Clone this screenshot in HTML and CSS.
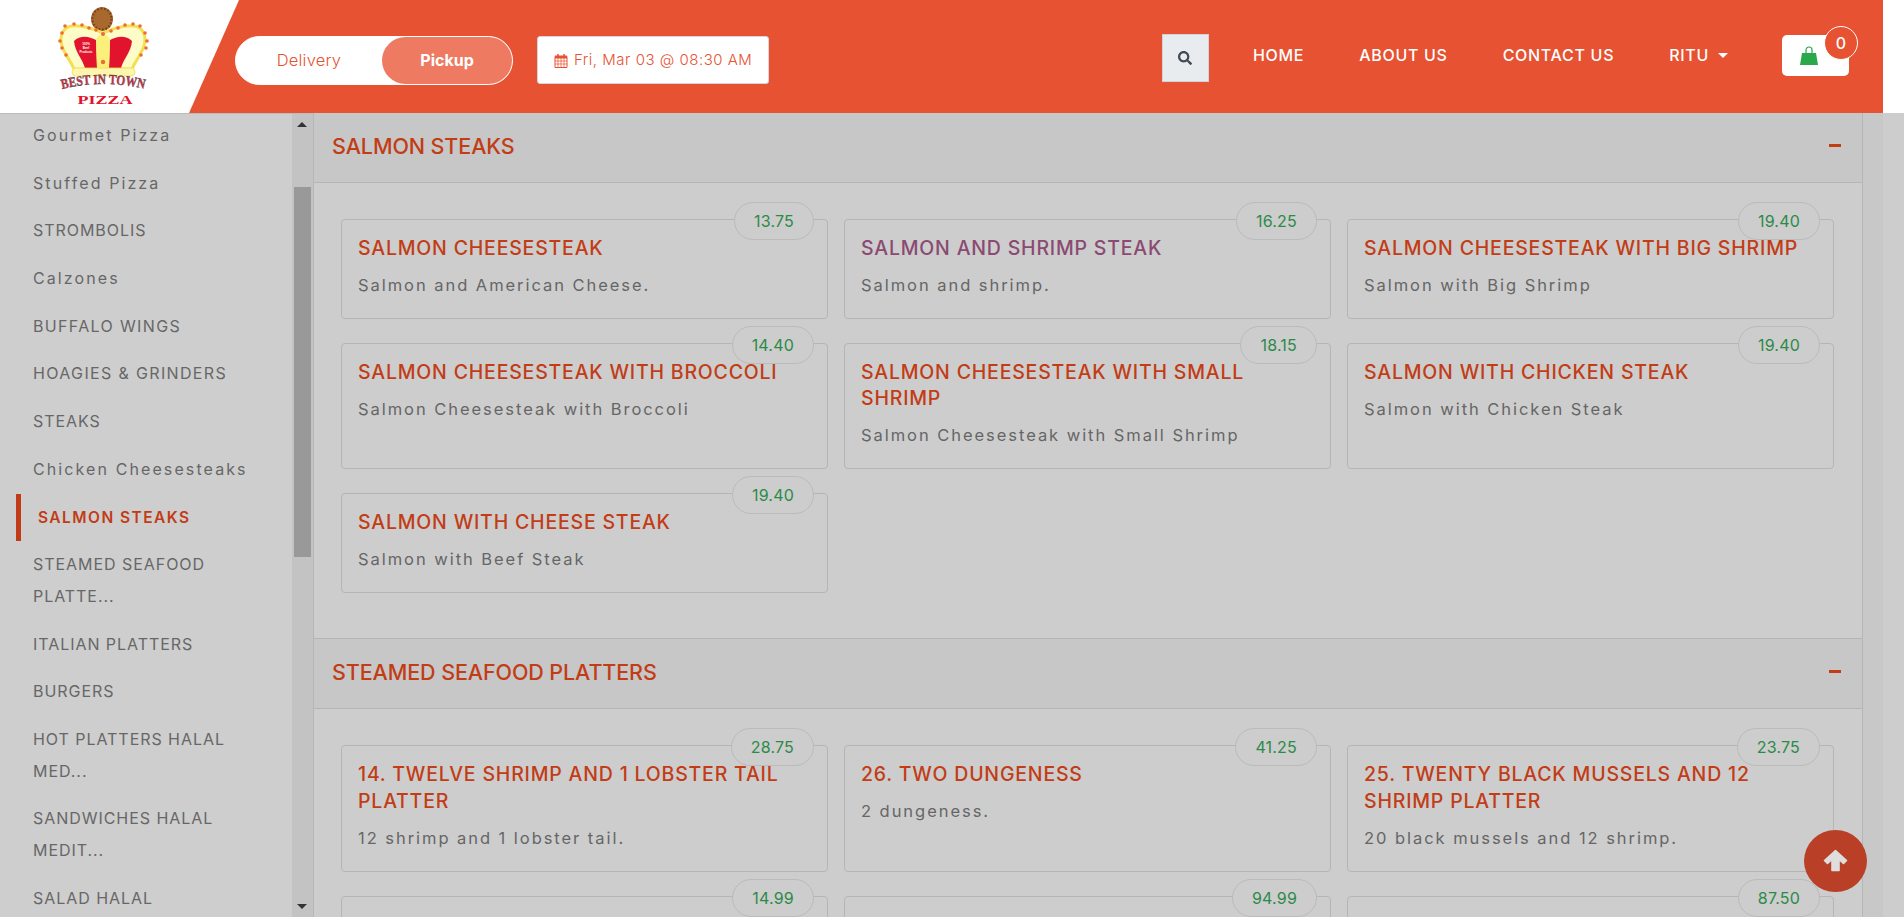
FILE: index.html
```html
<!DOCTYPE html>
<html lang="en">
<head>
<meta charset="utf-8">
<title>Best In Town Pizza</title>
<link rel="stylesheet" href="styles.css">
</head>
<body>
<header class="top">
  <div class="bar">
    <a class="logo">
      <svg class="logo-art" viewBox="0 0 106 106" width="106" height="106">
        <ellipse cx="52" cy="19" rx="11" ry="12" fill="#a9682e"/>
        <ellipse cx="52" cy="19" rx="9.500" ry="10.500" fill="none" stroke="#6e3f1a" stroke-width="2" stroke-dasharray="1.500 2"/>
        <path d="M53 33C44 29 32 25 22 26C13 27 9 36 12 46C15 55 20 60 24 69H82C86 60 91 55 94 46C97 36 93 27 84 26C74 25 62 29 53 33Z" fill="#fdfbc8" stroke="#f2e04e" stroke-width="3"/>
        <path d="M46 40C39 36 30 35 24 41C25 52 32 58 35 68H47Z" fill="#e2132c"/>
        <path d="M60 40C67 36 76 35 82 41C81 52 74 58 71 68H59Z" fill="#e2132c"/>
        <path d="M47 68L46 40C48 33 58 33 60 40L59 68Z" fill="#fbf07a"/>
        <rect x="22" y="68" width="63" height="8" rx="4" fill="#fdf6b0" stroke="#f2e04e" stroke-width=".8"/>
        <g fill="#ef6a3a">
          <circle cx="15" cy="26" r="1.800"/><circle cx="24" cy="24" r="1.800"/><circle cx="32" cy="25" r="1.800"/><circle cx="39" cy="28" r="1.800"/><circle cx="46" cy="30" r="1.800"/><circle cx="53" cy="34" r="2"/>
          <circle cx="61" cy="31" r="1.800"/><circle cx="68" cy="28" r="1.800"/><circle cx="75" cy="25" r="1.800"/><circle cx="83" cy="24" r="1.800"/><circle cx="90" cy="26" r="1.800"/>
          <circle cx="95" cy="33" r="1.800"/><circle cx="97" cy="41" r="1.800"/><circle cx="96" cy="48" r="1.800"/><circle cx="91" cy="55" r="1.800"/>
          <circle cx="12" cy="33" r="1.800"/><circle cx="10" cy="41" r="1.800"/><circle cx="12" cy="48" r="1.800"/><circle cx="16" cy="55" r="1.800"/><circle cx="53" cy="62" r="2.200"/>
        </g>
        <text x="36" y="45" text-anchor="middle" class="logo-tiny">100%</text>
        <text x="36" y="49" text-anchor="middle" class="logo-tiny">Beef</text>
        <text x="36" y="53" text-anchor="middle" class="logo-tiny">Products</text>
        <path id="logo-arc" d="M12 89Q53 79 95 89" fill="none"/>
        <text class="logo-best"><textPath href="#logo-arc" textLength="83" lengthAdjust="spacingAndGlyphs">BEST IN TOWN</textPath></text>
        <text x="55" y="104" text-anchor="middle" class="logo-pizza" textLength="55" lengthAdjust="spacingAndGlyphs">PIZZA</text>
      </svg>
    </a>
    <div class="toggle">
      <span class="toggle-off">Delivery</span>
      <span class="toggle-on">Pickup</span>
    </div>
    <div class="date">
      <svg class="cal" viewBox="0 0 14 15" width="14" height="15">
        <path d="M1 3.500h12v11H1z" fill="none" stroke="#e8502f"/>
        <path d="M1 2.500h12v3H1z" fill="#e8502f"/>
        <path d="M4 1v3M10 1v3" stroke="#e8502f" stroke-width="1.500"/>
        <path d="M1 8h12M1 11h12M4 5v9M7 5v9M10 5v9" stroke="#e8502f" stroke-width=".7"/>
      </svg>
      <span>Fri, Mar 03 @ 08:30 AM</span>
    </div>
    <div class="spacer"></div>
    <button class="search">
      <svg viewBox="0 0 512 512" width="14" height="14"><path fill="#3f4a54" d="M505 442.700L405.300 343c-4.500-4.500-10.600-7-17-7H372c27.600-35.300 44-79.700 44-128C416 93.100 322.900 0 208 0S0 93.100 0 208s93.100 208 208 208c48.300 0 92.700-16.400 128-44v16.300c0 6.400 2.500 12.500 7 17l99.700 99.700c9.400 9.400 24.600 9.400 33.900 0l28.300-28.300c9.400-9.400 9.400-24.600.1-34zM208 336c-70.700 0-128-57.200-128-128 0-70.700 57.200-128 128-128 70.700 0 128 57.200 128 128 0 70.700-57.200 128-128 128z"/></svg>
    </button>
    <nav class="nav">
      <a>HOME</a>
      <a>ABOUT US</a>
      <a>CONTACT US</a>
      <a class="user">RITU<i class="caret"></i></a>
    </nav>
    <div class="cart">
      <svg viewBox="0 0 18 19" width="18" height="19">
        <path d="M6 7V4a3 3 0 0 1 6 0v3" fill="none" stroke="#2aa84a" stroke-width="1.200"/>
        <path d="M2 7h14l2 12H0z" fill="#2aa84a"/>
      </svg>
      <span class="badge">0</span>
    </div>
  </div>
  <div class="top-gap"></div>
</header>

<div class="page">
  <aside class="side">
    <ul class="menu">
      <li class="lc">Gourmet Pizza</li>
      <li class="lc">Stuffed Pizza</li>
      <li>STROMBOLIS</li>
      <li class="lc">Calzones</li>
      <li class="wide">BUFFALO WINGS</li>
      <li class="wide">HOAGIES &amp; GRINDERS</li>
      <li>STEAKS</li>
      <li class="lc">Chicken Cheesesteaks</li>
      <li class="active">SALMON STEAKS</li>
      <li>STEAMED SEAFOOD PLATTE...</li>
      <li>ITALIAN PLATTERS</li>
      <li>BURGERS</li>
      <li>HOT PLATTERS HALAL MED...</li>
      <li>SANDWICHES HALAL MEDIT...</li>
      <li>SALAD HALAL</li>
    </ul>
    <div class="track">
      <i class="arrow-up"></i>
      <div class="thumb"></div>
      <i class="arrow-down"></i>
    </div>
  </aside>

  <main class="main">
    <section class="sec">
      <div class="sec-head"><h2>SALMON STEAKS</h2><i class="minus"></i></div>
      <div class="grid">
        <article class="card"><span class="price">13.75</span><h3>SALMON CHEESESTEAK</h3><p>Salmon and American Cheese.</p></article>
        <article class="card"><span class="price">16.25</span><h3 class="hover">SALMON AND SHRIMP STEAK</h3><p>Salmon and shrimp.</p></article>
        <article class="card"><span class="price">19.40</span><h3>SALMON CHEESESTEAK WITH BIG SHRIMP</h3><p>Salmon with Big Shrimp</p></article>
        <article class="card"><span class="price">14.40</span><h3>SALMON CHEESESTEAK WITH BROCCOLI</h3><p>Salmon Cheesesteak with Broccoli</p></article>
        <article class="card"><span class="price">18.15</span><h3>SALMON CHEESESTEAK WITH SMALL SHRIMP</h3><p>Salmon Cheesesteak with Small Shrimp</p></article>
        <article class="card"><span class="price">19.40</span><h3>SALMON WITH CHICKEN STEAK</h3><p>Salmon with Chicken Steak</p></article>
        <article class="card"><span class="price">19.40</span><h3>SALMON WITH CHEESE STEAK</h3><p>Salmon with Beef Steak</p></article>
      </div>
    </section>
    <section class="sec sec-next">
      <div class="sec-head"><h2>STEAMED SEAFOOD PLATTERS</h2><i class="minus"></i></div>
      <div class="grid">
        <article class="card"><span class="price">28.75</span><h3>14. TWELVE SHRIMP AND 1 LOBSTER TAIL PLATTER</h3><p>12 shrimp and 1 lobster tail.</p></article>
        <article class="card"><span class="price">41.25</span><h3>26. TWO DUNGENESS</h3><p>2 dungeness.</p></article>
        <article class="card"><span class="price">23.75</span><h3>25. TWENTY BLACK MUSSELS AND 12 SHRIMP PLATTER</h3><p>20 black mussels and 12 shrimp.</p></article>
        <article class="card card-cut"><span class="price">14.99</span></article>
        <article class="card card-cut"><span class="price">94.99</span></article>
        <article class="card card-cut"><span class="price">87.50</span></article>
      </div>
    </section>
  </main>
  <div class="gutter"></div>
  <div class="rest"></div>
</div>

<button class="to-top">
  <svg viewBox="0 0 25 23" width="25" height="23"><path fill="#dedede" stroke="#dedede" stroke-width="1.600" stroke-linejoin="round" d="M12.500 1.500L23.500 11.500L20.500 14.500L16 10.500V21.500H9V10.500L4.500 14.500L1.500 11.500Z"/></svg>
</button>
</body>
</html>
```

FILE: styles.css
```css
* { box-sizing: border-box; }
html, body { margin: 0; height: 100%; overflow: hidden; }
body { font-family: "Inter", "Liberation Sans", sans-serif; background: #cdcdcd; color: #666; }
ul, h2, h3, p { margin: 0; padding: 0; }

.top { display: flex; height: 113px; background: #fff; }
.bar { width: 1883px; display: flex; align-items: flex-start; background: #e65232; }
.top-gap { flex: 1; }

.logo { width: 239px; height: 113px; margin-right: -4px; background: #fff; clip-path: polygon(0 0, 100% 0, 189px 100%, 0 100%); padding: 0 0 0 50px; flex: none; }
.logo-art { display: block; }
.logo-best { font: 700 14px "Liberation Serif", serif; fill: #d9324a; stroke: #444; stroke-width: .4px; }
.logo-pizza { font: 700 13px "Liberation Serif", serif; fill: #e2132c; }
.logo-tiny { font: 700 3px "Liberation Sans", sans-serif; fill: #fff; }

.toggle { display: flex; width: 278px; height: 49px; margin-top: 36px; background: #fff; border: 1px solid #fff; border-radius: 25px; flex: none; }
.toggle-off { width: 146px; text-align: center; line-height: 47px; font-size: 16.500px; letter-spacing: .2px; font-weight: 300; color: #e65232; }
.toggle-on { flex: 1; text-align: center; line-height: 47px; font-size: 16px; font-weight: 700; color: #fff; background: #ee7a62; border-radius: 24px; }

.date { display: flex; align-items: center; gap: 6px; width: 232px; height: 48px; margin: 36px 0 0 24px; padding: 0 0 2px 16px; background: #fff; border: 1px solid #d5d5e0; border-radius: 3px; font-size: 15px; letter-spacing: .5px; font-weight: 300; color: #e65232; white-space: nowrap; flex: none; }
.cal { display: block; flex: none; margin-top: 2px; }

.spacer { flex: 1; }
.search { display: flex; align-items: center; justify-content: center; width: 47px; height: 48px; margin-top: 34px; padding: 0; background: #e9ecef; border: 1px solid #ced4da; flex: none; }

.nav { display: flex; margin: 43px 0 0 44px; font-size: 16px; line-height: 24px; font-weight: 500; letter-spacing: .7px; color: #fff; gap: 55px; white-space: nowrap; }
.user { display: flex; align-items: center; gap: 9px; }
.caret { width: 0; height: 0; border: 5px solid transparent; border-top-color: #fff; border-bottom: 0; }

.cart { position: relative; display: flex; align-items: center; justify-content: center; width: 67px; height: 41px; margin: 35px 34px 0 54px; padding: 0 14px 0 0; background: #fff; border-radius: 5px; flex: none; }
.badge { position: absolute; top: -9px; right: -9px; width: 34px; height: 34px; line-height: 32px; text-align: center; font-size: 16px; font-weight: 500; color: #fff; background: #e65232; border: 1px solid #fff; border-radius: 50%; }

.page { display: flex; height: 804px; overflow: hidden; }

.side { display: flex; width: 314px; flex: none; border-right: 1px solid #b6b6b6; border-top: 1px solid #bbb; background: #cecece; }
.menu { width: 292px; list-style: none; padding: 0 20px 0 16px; margin-top: -2px; flex: none; }
.menu li { padding: 8px 0 8px 17px; font-size: 16px; line-height: 31.680px; letter-spacing: .95px; color: #676767; }
.menu .wide { letter-spacing: 1.350px; }
.menu .lc { letter-spacing: 2.100px; }
.menu .active { padding-left: 17px; border-left: 5px solid #c13c16; font-weight: 600; font-size: 15.500px; letter-spacing: 1.450px; color: #c13c16; }

.track { position: relative; flex: 1; background: #c3c3c3; padding: 73px 2px 0; }
.thumb { height: 370px; background: #999; }
.arrow-up, .arrow-down { position: absolute; left: 5px; width: 0; height: 0; border: 5px solid transparent; }
.arrow-up { top: 8px; border-bottom-color: #333; border-top: 0; }
.arrow-down { bottom: 8px; border-top-color: #333; border-bottom: 0; }

.main { width: 1549px; flex: none; border-right: 1px solid #b6b6b6; }
.sec-head { display: flex; align-items: center; justify-content: space-between; height: 70px; padding: 0 21px 4px 18px; background: #c7c7c7; border-bottom: 1px solid #b5b5b5; }
.sec-next .sec-head { height: 71px; border-top: 1px solid #b5b5b5; }
.sec-head h2 { font-size: 21.500px; font-weight: 500; letter-spacing: -.1px; color: #c23c16; }
.minus { width: 12px; height: 3px; background: #c23c16; }

.grid { display: grid; grid-template-columns: repeat(3, 1fr); gap: 24px 16px; padding: 36px 28px 45px 27px; }
.card { position: relative; padding: 15px 16px 20px; border: 1px solid #b5b5b5; border-radius: 4px; background: #cdcdcd; }
.card-cut { min-height: 100px; }
.card h3 { font-size: 19.500px; line-height: 26.400px; font-weight: 500; letter-spacing: .8px; color: #c23c16; margin-bottom: 10.600px; }
.card h3.hover { color: #8a4a72; }
.card p { font-size: 16.500px; line-height: 26px; letter-spacing: 1.950px; color: #666; }
.price { position: absolute; top: -18px; right: 13px; padding: 0 19px; height: 38px; line-height: 36px; font-size: 16px; letter-spacing: .2px; color: #2c8a48; background: #cdcdcd; border: 1px solid #bbb; border-radius: 19px; }

.gutter { width: 20px; flex: none; background: #c8c8c8; }
.rest { flex: 1; background: #cdcdcd; }

.to-top { position: fixed; left: 1804px; top: 830px; display: flex; align-items: center; justify-content: center; width: 63px; height: 62px; padding: 0 0 2px; background: #b94027; border: 0; border-radius: 50%; }
```
